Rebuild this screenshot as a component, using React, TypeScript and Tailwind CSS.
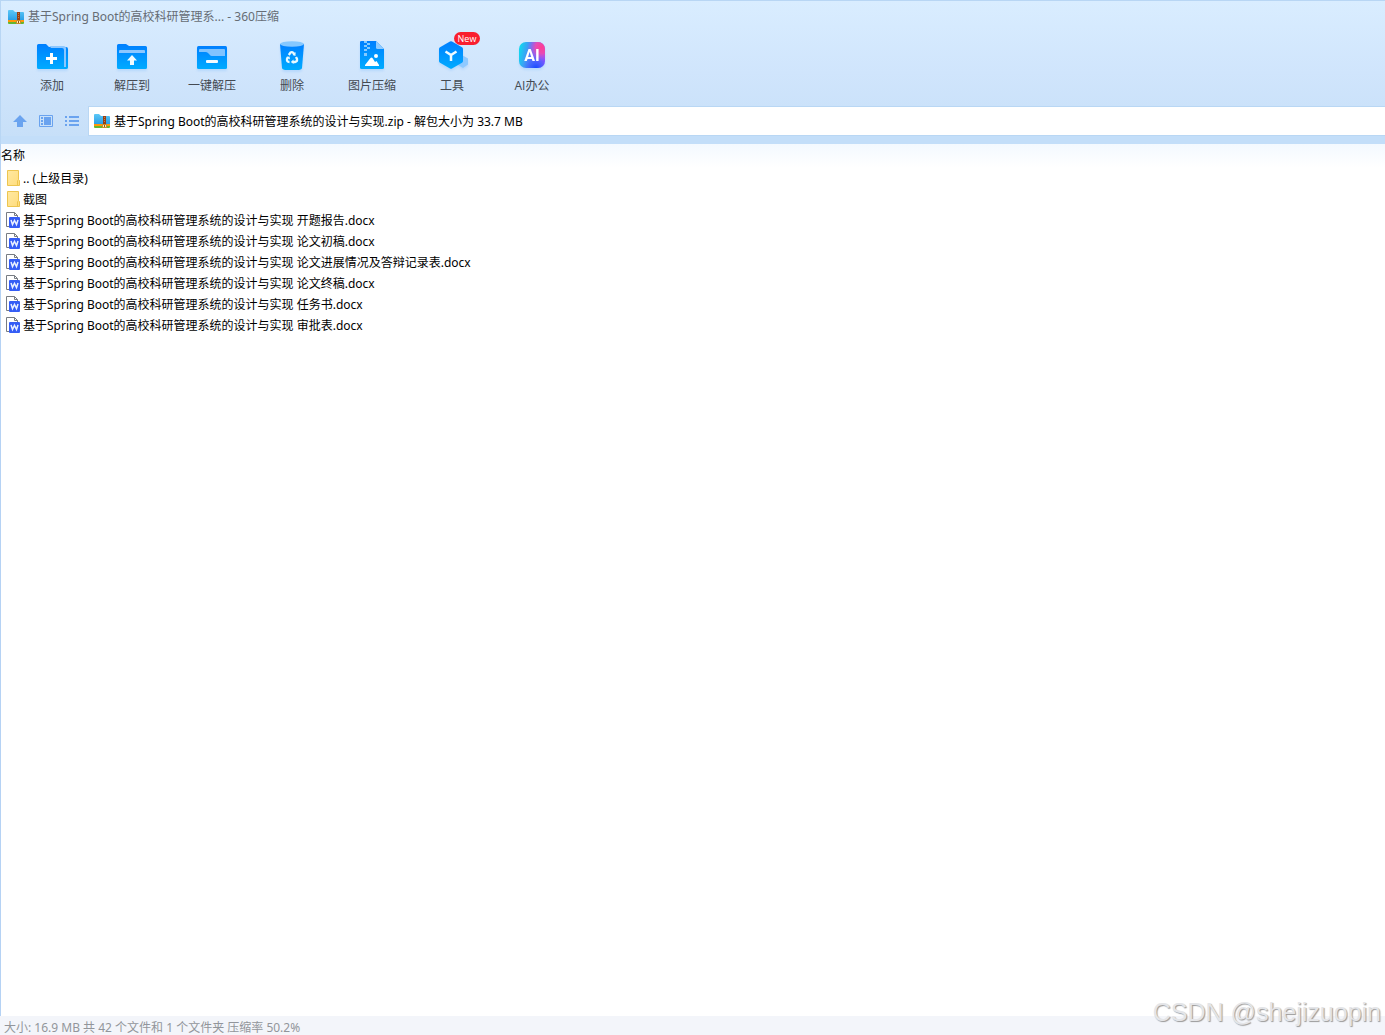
import type { ReactNode } from 'react';

function ArchiveIcon() {
  return (
    <svg width="16" height="15" viewBox="0 0 16 15" className="shrink-0" aria-hidden="true">
      <defs>
        <linearGradient id="archive" x1="0" y1="0" x2="0" y2="1">
          <stop stopColor="#5cc8f7" />
          <stop offset="1" stopColor="#2a9fe6" />
        </linearGradient>
      </defs>
      <path d="M0 1Q0 0 1 0H5L7 2H15Q16 2 16 3V10H0Z" fill="url(#archive)" />
      <path d="M0 10H16V12H0Z" fill="#ff9708" />
      <path d="M0 12H16V13Q16 14 15 14H1Q0 14 0 13Z" fill="#65b62f" />
      <path d="M9 2H12V11H9Z" fill="#963f17" />
      <path d="M10 3H11V4H10ZM10 5H11V6H10ZM10 7H11V8H10Z" fill="#c9803f" />
      <path d="M8.500 10.500H12.500V13.500H8.500Z" fill="#fff0b0" stroke="#c98a2a" />
      <path d="M10.500 11V13" stroke="#935017" />
    </svg>
  );
}

function Blue({ id }: { id: string }) {
  return (
    <defs>
      <linearGradient id={id} x1="0" y1="0" x2="0" y2="1">
        <stop stopColor="#007fff" />
        <stop offset="1" stopColor="#00abff" />
      </linearGradient>
    </defs>
  );
}

const iconClass = 'h-9 w-10 drop-shadow-[0_2px_1px_rgba(0,120,255,0.12)]';

function AddIcon() {
  return (
    <svg viewBox="0 0 40 36" className={iconClass} aria-hidden="true">
      <Blue id="add" />
      <path d="M5 8.500Q5 7 6.500 7H14L17 10H34Q36 10 36 12V30.500Q36 32 34 32H6.500Q5 32 5 30.500Z" fill="url(#add)" />
      <path d="M17.500 9H31.500Q34 9 34 11.500V30H32V13Q32 11 30 11H19Z" fill="#8cc7ff" />
      <path d="M19.500 16V27M14 21.500H25" stroke="#fff" strokeWidth="3" />
    </svg>
  );
}

function ExtractIcon() {
  return (
    <svg viewBox="0 0 40 36" className={iconClass} aria-hidden="true">
      <Blue id="extract" />
      <path d="M5 8.500Q5 7 6.500 7H14L17 9H33.500Q35 9 35 10.500V30.500Q35 32 33.500 32H6.500Q5 32 5 30.500Z" fill="url(#extract)" />
      <path d="M7 14Q7 13 8 13H32Q33 13 33 14V16H7Z" fill="#8cc7ff" />
      <path d="M20 18L25 23.500H22V28H18V23.500H15Z" fill="#f0fbff" />
    </svg>
  );
}

function QuickIcon() {
  return (
    <svg viewBox="0 0 40 36" className={iconClass} aria-hidden="true">
      <Blue id="quick" />
      <rect x="5" y="9" width="30" height="23" rx="1.500" fill="url(#quick)" />
      <path d="M7 13Q7 12 8 12H32Q33 12 33 13V19H20Q18.500 19 17.500 17.500L16 16Q15 15 13.500 15H7Z" fill="#80c3ff" />
      <rect x="14" y="23" width="12" height="3" rx="1" fill="#f4fbff" />
    </svg>
  );
}

function DeleteIcon() {
  return (
    <svg viewBox="0 0 40 36" className={iconClass} aria-hidden="true">
      <Blue id="delete" />
      <path d="M8 7H32L30 31Q29.500 33 25 33H15Q10.500 33 10 31Z" fill="url(#delete)" />
      <ellipse cx="20" cy="7" rx="12" ry="2.800" fill="#86c8ff" />
      <g fill="none" stroke="#e9faff" strokeWidth="2.300">
        <path d="M16.800 18L18.500 15.500Q20 14.500 21.500 16L22.500 17.500M24 20L25 22Q25.500 24.500 23 25H21M17.500 25Q14.500 25 15 22L16.200 20" />
      </g>
      <path d="M23.500 15V19L20.500 18ZM21.500 22.500V27L18.800 25ZM14 20L17.500 19.500L18 22.500Z" fill="#e9faff" />
    </svg>
  );
}

function ImageIcon() {
  return (
    <svg viewBox="0 0 40 36" className={iconClass} aria-hidden="true">
      <Blue id="image" />
      <path d="M8 5Q8 4 9.500 4H24L32 12V30.500Q32 32 30.500 32H9.500Q8 32 8 30.500Z" fill="url(#image)" />
      <path d="M24 4L32 12H25.500Q24 12 24 10.500Z" fill="#91ccff" />
      <path d="M12 4H15V6H12ZM15 6H18V8H15ZM12 8H15V10H12ZM15 10H18V12H15ZM12 12H15V14H12ZM12 16H15V19H12Z" fill="#85caff" />
      <circle cx="24" cy="19" r="2" fill="#fff" />
      <path d="M13 29V28L18.500 21Q19.500 20 20.500 21L23 25L24.500 24L27 28V29Z" fill="#fff" />
    </svg>
  );
}

function ToolsIcon() {
  return (
    <svg viewBox="0 0 40 36" className={iconClass} aria-hidden="true">
      <Blue id="tools" />
      <path d="M30 18L36 21.500V27.500L31 31L26 28V21Z" fill="#8ec9ff" />
      <path d="M18 4.500Q19 4 20 4.500L30 10.300Q31 11 31 12V24Q31 25 30 25.700L20 31.500Q19 32 18 31.500L8 25.700Q7 25 7 24V12Q7 11 8 10.300Z" fill="url(#tools)" />
      <path d="M13.500 14.500L19 18L24.500 14.500M19 18V24" stroke="#eefaff" strokeWidth="2.500" fill="none" />
    </svg>
  );
}

function AiIcon() {
  return (
    <svg viewBox="0 0 40 36" className={iconClass} aria-hidden="true">
      <defs>
        <linearGradient id="ai-base" x1="0" y1=".4" x2="1" y2=".6">
          <stop stopColor="#12d6ee" />
          <stop offset=".48" stopColor="#5d73fa" />
          <stop offset="1" stopColor="#8c4dff" />
        </linearGradient>
        <radialGradient id="ai-pink" cx=".88" cy=".2" r=".55">
          <stop stopColor="#ff3d92" />
          <stop offset=".45" stopColor="#f24aae" stopOpacity=".9" />
          <stop offset="1" stopColor="#b15af4" stopOpacity="0" />
        </radialGradient>
        <radialGradient id="ai-blue" cx=".65" cy="1" r=".5">
          <stop stopColor="#1748ff" />
          <stop offset="1" stopColor="#2875ff" stopOpacity="0" />
        </radialGradient>
      </defs>
      <rect x="7" y="5" width="26" height="26" rx="7" fill="url(#ai-base)" />
      <rect x="7" y="5" width="26" height="26" rx="7" fill="url(#ai-blue)" />
      <rect x="7" y="5" width="26" height="26" rx="7" fill="url(#ai-pink)" />
      <text x="20" y="24" textAnchor="middle" fontFamily="Roboto, sans-serif" fontSize="16" fontWeight="700" fill="#fff">AI</text>
    </svg>
  );
}

function FolderIcon() {
  return (
    <svg width="14" height="18" viewBox="0 0 14 18" className="shrink-0" aria-hidden="true">
      <defs>
        <linearGradient id="folder" x1="0" y1="0" x2="1" y2="1">
          <stop stopColor="#ffe9a2" />
          <stop offset="1" stopColor="#ffdc7b" />
        </linearGradient>
      </defs>
      <path d="M1.500 .500H12.500V9.500L13.500 10.500V15.500H1.500Z" fill="url(#folder)" stroke="#edc54f" />
      <path d="M12.500 9.500L11.500 11V15.500" fill="none" stroke="#edc54f" />
    </svg>
  );
}

function DocIcon() {
  return (
    <svg width="14" height="18" viewBox="0 0 14 18" className="shrink-0" aria-hidden="true">
      <path d="M.500 .500H8.500L11.500 3.500V14.500H.500Z" fill="#fff" stroke="#777c83" />
      <path d="M8.500 .500V3.500H11.500" fill="none" stroke="#777c83" />
      <rect x="3" y="5" width="11" height="11" rx="1" fill="#355df5" />
      <path d="M5 8L6.500 12.500L8.500 8.500L10.500 12.500L12 8" fill="none" stroke="#eaf1ff" strokeWidth="1.500" />
    </svg>
  );
}

const tools: { label: string; icon: ReactNode; badge?: string }[] = [
  { label: '添加', icon: <AddIcon /> },
  { label: '解压到', icon: <ExtractIcon /> },
  { label: '一键解压', icon: <QuickIcon /> },
  { label: '删除', icon: <DeleteIcon /> },
  { label: '图片压缩', icon: <ImageIcon /> },
  { label: '工具', icon: <ToolsIcon />, badge: 'New' },
  { label: 'AI办公', icon: <AiIcon /> },
];

const project = '基于Spring Boot的高校科研管理系统的设计与实现';

const files = [
  { name: '.. (上级目录)', folder: true },
  { name: '截图', folder: true },
  { name: `${project} 开题报告.docx`, folder: false },
  { name: `${project} 论文初稿.docx`, folder: false },
  { name: `${project} 论文进展情况及答辩记录表.docx`, folder: false },
  { name: `${project} 论文终稿.docx`, folder: false },
  { name: `${project} 任务书.docx`, folder: false },
  { name: `${project} 审批表.docx`, folder: false },
];

export default function App() {
  return (
    <div className="flex min-h-screen flex-col bg-white font-['Noto_Sans','Noto_Sans_CJK_SC',sans-serif] text-[12px] leading-4 text-black">
      <header className="border-t border-l border-[#b8d6f4] bg-linear-to-b from-[#d9edff] via-[#d0e5fc] to-[#c6dff8]">
        <div className="flex h-8 items-center gap-1 pl-[7px] text-[#666d75]">
          <ArchiveIcon />
          <h1>基于Spring Boot的高校科研管理系... - 360压缩</h1>
        </div>

        <nav
          aria-label="工具栏"
          className="flex h-[73px] pt-1 pl-[11px] font-['Open_Sans','Noto_Sans_CJK_SC',sans-serif] text-[#444a52]"
        >
          {tools.map((tool) => (
            <button key={tool.label} type="button" className="relative flex w-20 flex-col items-center gap-[5px]">
              {tool.icon}
              <span>{tool.label}</span>
              {tool.badge && (
                <span className="absolute -top-[5px] left-[42px] flex h-[13px] w-[26px] items-center justify-center rounded-full bg-[#f91e2e] text-[9px] leading-3 text-white">
                  {tool.badge}
                </span>
              )}
            </button>
          ))}
        </nav>

        <div className="flex h-[30px] items-stretch">
          <div className="flex w-[87px] shrink-0 items-center gap-3 pl-3 text-[#6aa3ef]">
            <button type="button" aria-label="上一级">
              <svg width="14" height="14" viewBox="0 0 14 14"><path d="M7 1L14 8H10V13H4V8H0Z" fill="currentColor" /></svg>
            </button>
            <button type="button" aria-label="预览">
              <svg width="14" height="12" viewBox="0 0 14 12">
                <path d="M.500 .500H13.500V11.500H.500Z" fill="none" stroke="currentColor" />
                <path d="M5 2H12V10H5ZM2 2H4V4H2ZM2 5H4V7H2ZM2 8H4V10H2Z" fill="currentColor" />
              </svg>
            </button>
            <button type="button" aria-label="列表">
              <svg width="14" height="12" viewBox="0 0 14 12"><path d="M0 1H2V3H0ZM4 1H14V3H4ZM0 5H2V7H0ZM4 5H14V7H4ZM0 9H2V11H0ZM4 9H14V11H4Z" fill="currentColor" /></svg>
            </button>
          </div>
          <label className="flex min-w-0 flex-1 items-center gap-1 border-y border-l border-[#b9d7f4] bg-white pl-[5px]">
            <ArchiveIcon />
            <input
              aria-label="压缩包路径"
              type="text"
              defaultValue={`${project}.zip - 解包大小为 33.7 MB`}
              className="h-full min-w-0 flex-1 bg-transparent outline-none"
            />
          </label>
        </div>
        <div className="h-2 bg-[#c3def9]" />
      </header>

      <main className="flex-1 border-l border-[#b5d2f4]">
        <table className="w-full table-fixed border-collapse text-left">
          <thead>
            <tr className="h-6 bg-linear-to-b from-[#f3f9ff] to-white">
              <th scope="col" className="p-0 font-normal">名称</th>
            </tr>
          </thead>
          <tbody>
            {files.map((file) => (
              <tr key={file.name} className="h-[21px]">
                <td className="p-0">
                  <div className="flex items-center gap-[3px] pl-[5px]">
                    {file.folder ? <FolderIcon /> : <DocIcon />}
                    <span className="whitespace-nowrap">{file.name}</span>
                  </div>
                </td>
              </tr>
            ))}
          </tbody>
        </table>
      </main>

      <footer className="relative flex h-[19px] items-center bg-[#f3f5fa] pt-1 pl-1 text-[#92959b]">
        <span>大小: 16.9 MB 共 42 个文件和 1 个文件夹 压缩率 50.2%</span>
        <span className="absolute right-1 bottom-[9px] font-['Liberation_Sans',sans-serif] text-[25px] leading-7 text-[#e4e5e8] [text-shadow:1px_1px_1px_#999]">
          CSDN @shejizuopin
        </span>
      </footer>
    </div>
  );
}
